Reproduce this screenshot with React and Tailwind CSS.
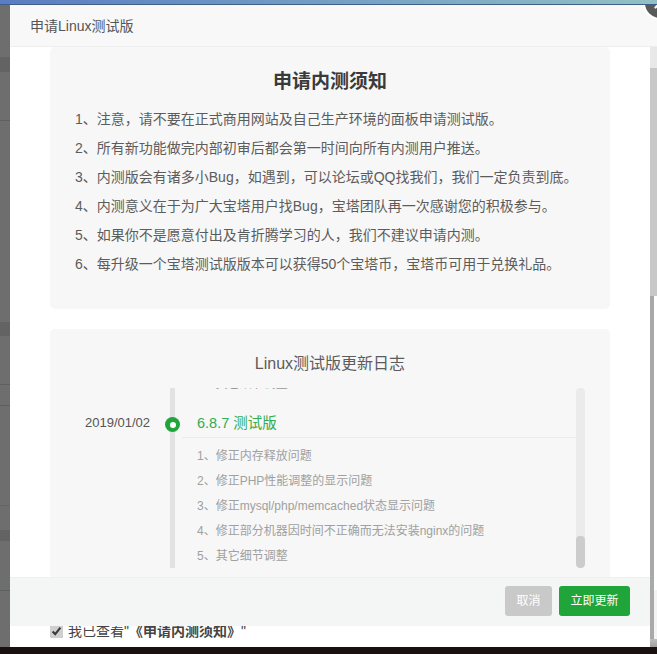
import React from "react";
import { X } from "lucide-react";

const notes = [
  "1、注意，请不要在正式商用网站及自己生产环境的面板申请测试版。",
  "2、所有新功能做完内部初审后都会第一时间向所有内测用户推送。",
  "3、内测版会有诸多小Bug，如遇到，可以论坛或QQ找我们，我们一定负责到底。",
  "4、内测意义在于为广大宝塔用户找Bug，宝塔团队再一次感谢您的积极参与。",
  "5、如果你不是愿意付出及肯折腾学习的人，我们不建议申请内测。",
  "6、每升级一个宝塔测试版版本可以获得50个宝塔币，宝塔币可用于兑换礼品。",
];

const changes = [
  "1、修正内存释放问题",
  "2、修正PHP性能调整的显示问题",
  "3、修正mysql/php/memcached状态显示问题",
  "4、修正部分机器因时间不正确而无法安装nginx的问题",
  "5、其它细节调整",
];

function LeftStrip() {
  return (
    <div className="flex w-[10px] shrink-0 flex-col bg-[#6e6e6e]">
      <div className="h-[52px]" />
      <div className="h-[15px] bg-[#636363]" />
      <div className="h-[49px] border-b border-[#5f5f5f]" />
      <div className="h-[201px]" />
      <div className="h-[14px] bg-[#636363]" />
      <div className="h-[49px] border-b border-[#5f5f5f]" />
      <div className="h-[21px] border-b border-[#5f5f5f]" />
      <div className="h-[100px] border-b border-[#656565]" />
      <div className="h-[24px]" />
      <div className="h-[11px] bg-[#636363]" />
      <div className="h-[50px] border-b border-[#5f5f5f]" />
      <div className="flex-1" />
    </div>
  );
}

function Rail() {
  return (
    <div className="flex w-[7px] shrink-0 flex-col">
      <div className="h-[21px] bg-[#e8e8e8]" />
      <div className="h-[228px] bg-[#c8c8c8]" />
      <div className="h-[294px] border-l-4 border-[#a9a9a9] bg-white" />
      <div className="h-[49px] border-l-4 border-[#a9a9a9] bg-[#f3f3f3]" />
      <div className="flex-1 bg-gradient-to-b from-[#bdbdbd] to-[#a0a0a0]" />
    </div>
  );
}

function Timeline() {
  return (
    <div className="flex h-[180px] pl-[35px] pr-[25px]">
      <div className="w-[65px] shrink-0 pt-[25px] text-[13px] leading-[20px] text-[#555]">2019/01/02</div>
      <div className="relative ml-[20px] w-[5px] shrink-0 bg-[#e2e2e2]">
        <div className="absolute left-[-5px] top-[29px] flex h-[15px] w-[15px] items-center justify-center rounded-full bg-[#20a53a]">
          <div className="h-[6px] w-[6px] rounded-full bg-white" />
        </div>
      </div>
      <div className="ml-[7px] min-w-0 flex-1 overflow-hidden">
        <div className="mt-[-16px] pl-[15px] text-[12px] leading-[25px] text-[#999]">5、其它细节调整</div>
        <div className="mt-[12px] h-[29px] border-b border-[#ececec] pl-[15px] text-[14.5px] leading-[28px] text-[#34ad4c]">
          6.8.7 测试版
        </div>
        <ul className="pl-[15px] pt-[6px] text-[12px] leading-[25px] text-[#a0a0a0]">
          {changes.map((c) => (
            <li key={c} className="whitespace-nowrap">{c}</li>
          ))}
        </ul>
      </div>
      <div className="flex w-[9px] shrink-0 flex-col overflow-hidden rounded-[4px] bg-[#ebebeb]">
        <div className="flex-1" />
        <div className="h-[32px] rounded-[4px] bg-[#cccccc]" />
      </div>
    </div>
  );
}

export default function App() {
  return (
    <div
      className="relative flex h-[654px] w-[657px] flex-col overflow-hidden bg-white"
      style={{ fontFamily: '"Liberation Sans", "Noto Sans CJK SC", sans-serif' }}
    >
      <div className="relative z-20 h-[5px] shrink-0 border-b border-[#3f5f86] bg-gradient-to-r from-[#5a7cc2] to-[#92c0c4]" />
      <div className="flex min-h-0 flex-1">
        <LeftStrip />
        <div className="flex min-w-0 flex-1 flex-col">
          <div className="h-[42px] shrink-0 border-b border-[#eeeeee] bg-[#f8f8f8] pl-[20px] text-[14px] leading-[42px] text-[#555]">
            申请Linux测试版
          </div>
          <div className="flex min-h-0 flex-1">
            <div className="flex min-w-0 flex-1 flex-col">
              <div className="h-[530px] shrink-0 overflow-hidden bg-white px-[40px]">
                <div className="rounded-[5px] bg-[#f7f7f7] pb-[30px] pl-[25px] pt-[21px]">
                  <h2 className="mb-[9px] pr-[25px] text-center text-[19px] font-bold leading-[28px] text-[#3a3a3a]">申请内测须知</h2>
                  <ul className="text-[14px] leading-[29px] text-[#5c5c5c]">
                    {notes.map((n) => (
                      <li key={n} className="whitespace-nowrap">{n}</li>
                    ))}
                  </ul>
                </div>
                <div className="mt-[20px] rounded-[5px] bg-[#f7f7f7] pb-[20px] pt-[23px]">
                  <h3 className="mb-[12px] text-center text-[16px] font-normal leading-[24px] text-[#5c5c5c]">Linux测试版更新日志</h3>
                  <Timeline />
                </div>
              </div>
              <div className="flex h-[49px] shrink-0 items-start justify-end gap-[7px] border-t border-[#eef0f0] bg-[#f4f6f6] pr-[20px] pt-[8px]">
                <button className="h-[30px] w-[47px] rounded-[3px] bg-[#c9c9c9] text-[12px] text-white">取消</button>
                <button className="h-[30px] w-[71px] rounded-[3px] bg-[#20a53a] text-[12px] text-white">立即更新</button>
              </div>
              <div className="min-h-0 flex-1 overflow-hidden bg-white pl-[40px]">
                <label className="mt-[-5px] flex items-center text-[14px] leading-[20px] text-[#444]">
                  <input type="checkbox" defaultChecked className="mr-[5px] mt-[1px] h-[13px] w-[13px] rounded-[2px] border border-[#999] accent-[#cfcfcf]" />
                  <span>我已查看"<b>《申请内测须知》</b>"</span>
                </label>
              </div>
            </div>
            <Rail />
          </div>
        </div>
      </div>
      <div className="h-[7px] shrink-0 bg-[#1a1010]" />
      <div className="absolute left-[645px] top-[-12px] z-10 flex h-[30px] w-[30px] items-center justify-center rounded-full bg-[#5a5a5a] ring-2 ring-white">
        <X size={18} strokeWidth={3} className="text-white" />
      </div>
    </div>
  );
}
